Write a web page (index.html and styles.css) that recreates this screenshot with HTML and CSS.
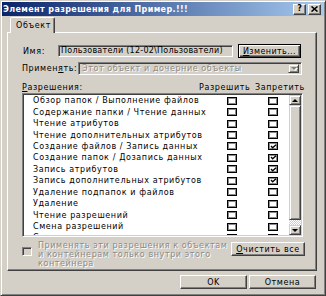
FILE: index.html
```html
<!DOCTYPE html>
<html lang="ru">
<head>
<meta charset="utf-8">
<title>Элемент разрешения</title>
<link rel="stylesheet" href="styles.css">
</head>
<body>
<div class="window">
  <div class="titlebar">
    <span class="title">Элемент разрешения для Пример.!!!</span>
    <div class="cbtns">
      <span class="cbtn">?</span>
      <span class="cbtn"><svg width="7" height="6" viewBox="0 0 7 6"><path d="M0.5 0.5 L6.5 5.5 M6.5 0.5 L0.5 5.5" stroke="#000" stroke-width="1.6" fill="none"/></svg></span>
    </div>
  </div>
  <div class="client">
    <div class="tabs"><div class="tab">Объект</div></div>
    <div class="panel">
      <div class="row-name">
        <span class="lbl-name">Имя:</span>
        <div class="field">Пользователи (12-02\Пользователи)</div>
        <div class="btn btn-change"><span><u>И</u>зменить...</span></div>
      </div>
      <div class="row-apply">
        <span class="lbl-apply">Примен<u>я</u>ть:</span>
        <div class="combo">
          <span class="combo-text">Этот объект и дочерние объекты</span>
          <span class="combo-arrow"><span class="tri-down dis"></span></span>
        </div>
      </div>
      <div class="list-head">
        <span class="lh-title"><u>Р</u>азрешения:</span>
        <span class="lh-col1">Разрешить</span>
        <span class="lh-col2">Запретить</span>
      </div>
      <div class="list">
        <div class="rows">
          <div class="perm"><span class="pname">Обзор папок / Выполнение файлов</span><span class="cb"></span><span class="cb cb2"></span></div>
          <div class="perm"><span class="pname">Содержание папки / Чтение данных</span><span class="cb"></span><span class="cb cb2"></span></div>
          <div class="perm"><span class="pname">Чтение атрибутов</span><span class="cb"></span><span class="cb cb2"></span></div>
          <div class="perm"><span class="pname">Чтение дополнительных атрибутов</span><span class="cb"></span><span class="cb cb2"></span></div>
          <div class="perm"><span class="pname">Создание файлов / Запись данных</span><span class="cb"></span><span class="cb cb2"><svg class="chk" viewBox="0 0 8 6"><path d="M1 2.5 L3 4.5 L7 0.8" stroke="#000" stroke-width="1.6" fill="none"/></svg></span></div>
          <div class="perm"><span class="pname">Создание папок / Дозапись данных</span><span class="cb"></span><span class="cb cb2"><svg class="chk" viewBox="0 0 8 6"><path d="M1 2.5 L3 4.5 L7 0.8" stroke="#000" stroke-width="1.6" fill="none"/></svg></span></div>
          <div class="perm"><span class="pname">Запись атрибутов</span><span class="cb"></span><span class="cb cb2"><svg class="chk" viewBox="0 0 8 6"><path d="M1 2.5 L3 4.5 L7 0.8" stroke="#000" stroke-width="1.6" fill="none"/></svg></span></div>
          <div class="perm"><span class="pname">Запись дополнительных атрибутов</span><span class="cb"></span><span class="cb cb2"><svg class="chk" viewBox="0 0 8 6"><path d="M1 2.5 L3 4.5 L7 0.8" stroke="#000" stroke-width="1.6" fill="none"/></svg></span></div>
          <div class="perm"><span class="pname">Удаление подпапок и файлов</span><span class="cb"></span><span class="cb cb2"></span></div>
          <div class="perm"><span class="pname">Удаление</span><span class="cb"></span><span class="cb cb2"></span></div>
          <div class="perm"><span class="pname">Чтение разрешений</span><span class="cb"></span><span class="cb cb2"></span></div>
          <div class="perm"><span class="pname">Смена разрешений</span><span class="cb"></span><span class="cb cb2"></span></div>
          <div class="perm"><span class="pname">Смена владельца</span><span class="cb"></span><span class="cb cb2"></span></div>
        </div>
        <div class="sb">
          <div class="sb-btn"><span class="tri-up"></span></div>
          <div class="sb-thumb"></div>
          <div class="sb-track"></div>
          <div class="sb-btn"><span class="tri-down"></span></div>
        </div>
      </div>
      <div class="bottom">
        <span class="cb-dis"></span>
        <div class="dis-text">Применять эти разрешения к объектам<br>и контейнерам только внутри этого<br>контейнера</div>
        <div class="btn btn-clear"><u>О</u>чистить все</div>
      </div>
    </div>
    <div class="footer">
      <div class="btn btn-foot">OK</div>
      <div class="btn btn-foot">Отмена</div>
    </div>
  </div>
</div>
</body>
</html>
```

FILE: styles.css
```css
* { box-sizing: border-box; }
html, body { margin: 0; padding: 0; }
body {
  width: 326px;
  height: 296px;
  overflow: hidden;
  background: #d4d0c8;
  font-family: "DejaVu Sans", sans-serif;
  font-size: 8px;
  letter-spacing: 0.6px;
  color: #000;
}
u { text-decoration: underline; text-underline-offset: 1px; }

.window {
  width: 326px;
  height: 296px;
  background: #d4d0c8;
  border: 1px solid;
  border-color: #d4d0c8 #404040 #404040 #d4d0c8;
  box-shadow: inset 1px 1px #fff, inset -1px -1px #808080;
  padding: 1px;
  display: flex;
  flex-direction: column;
}

.titlebar {
  flex: none;
  height: 14px;
  background: linear-gradient(90deg, #0a246a, #a6caf0);
  display: flex;
  align-items: center;
  padding: 0 3px 0 1px;
}
.title {
  flex: 1;
  color: #fff;
  font-weight: bold;
  font-size: 8px;
  letter-spacing: 0.4px;
  white-space: nowrap;
}
.cbtns { display: flex; gap: 2px; }
.cbtn {
  width: 13px;
  height: 11px;
  background: #d4d0c8;
  border: 1px solid;
  border-color: #fff #404040 #404040 #fff;
  box-shadow: inset -1px -1px #808080;
  display: flex;
  align-items: center;
  justify-content: center;
  font-weight: bold;
  font-size: 8px;
  letter-spacing: 0;
  line-height: 1;
}

.client {
  flex: 1;
  display: flex;
  flex-direction: column;
  padding: 1px 7px 0 5px;
}
.tabs { height: 15px; display: flex; padding-left: 3px; }
.tab {
  position: relative;
  z-index: 1;
  width: 45px;
  height: 16px;
  background: #d4d0c8;
  border: 1px solid;
  border-bottom: none;
  border-color: #fff #404040 transparent #fff;
  box-shadow: inset -1px 0 #808080;
  border-radius: 2px 2px 0 0;
  padding: 3px 0 0 5px;
  line-height: 9px;
}

.panel {
  height: 239px;
  border: 1px solid;
  border-color: #fff #404040 #404040 #fff;
  box-shadow: inset -1px -1px #808080;
  padding: 11px 13px 0 14px;
  display: flex;
  flex-direction: column;
}

.row-name { display: flex; align-items: center; height: 14px; }
.lbl-name { width: 36px; padding-left: 1px; }
.field {
  width: 175px;
  height: 12px;
  border: 1px solid;
  border-color: #808080 #fff #fff #808080;
  box-shadow: inset 1px 1px #404040, inset -1px -1px #d4d0c8;
  padding-left: 2px;
  line-height: 10px;
  letter-spacing: 0.25px;
  white-space: nowrap;
  overflow: hidden;
}
.btn {
  background: #d4d0c8;
  border: 1px solid;
  border-color: #fff #404040 #404040 #fff;
  box-shadow: inset -1px -1px #808080;
  height: 14px;
  display: flex;
  align-items: center;
  justify-content: center;
  white-space: nowrap;
}
.btn-change {
  width: 63px;
  margin-left: 5px;
  letter-spacing: 0.4px;
  border: 1px solid #000;
  box-shadow: inset 1px 1px #fff, inset -1px -1px #404040, inset -2px -2px #808080;
}

.row-apply { display: flex; align-items: center; height: 13px; margin-top: 4px; }
.lbl-apply { width: 56px; }
.combo {
  width: 224px;
  height: 13px;
  border: 1px solid;
  border-color: #808080 #fff #fff #808080;
  box-shadow: inset 1px 1px #404040, inset -1px -1px #d4d0c8;
  display: flex;
  align-items: center;
  padding: 0 2px 0 3px;
}
.combo-text, .dis-text {
  color: #8c8a86;
  text-shadow: 1px 1px #fff;
  white-space: nowrap;
}
.combo-arrow {
  margin-left: auto;
  width: 11px;
  height: 9px;
  background: #d4d0c8;
  border: 1px solid;
  border-color: #d4d0c8 #404040 #404040 #d4d0c8;
  box-shadow: inset 1px 1px #fff, inset -1px -1px #808080;
  display: flex;
  align-items: center;
  justify-content: center;
}
.tri-down, .tri-up {
  width: 0;
  height: 0;
  border-left: 3px solid transparent;
  border-right: 3px solid transparent;
}
.tri-down { border-top: 3px solid #000; }
.tri-up { border-bottom: 3px solid #000; }
.tri-down.dis { border-top-color: #808080; filter: drop-shadow(1px 1px 0 #fff); }

.list-head { display: flex; height: 10px; margin-top: 8px; line-height: 10px; }
.lh-title { flex: 1; }
.lh-col1 { width: 56px; }
.lh-col2 { width: 48px; }

.list {
  height: 144px;
  display: flex;
  background: #fff;
  border: 1px solid;
  border-color: #808080 #fff #fff #808080;
  box-shadow: inset 1px 1px #404040, inset -1px -1px #d4d0c8;
  padding: 1px;
}
.rows { flex: 1; overflow: hidden; background: #fff; }
.perm { height: 11.45px; display: flex; align-items: center; }
.pname { width: 203px; flex: none; padding-left: 9px; white-space: nowrap; }
.cb {
  flex: none;
  width: 10px;
  height: 8px;
  border: 1px solid #000;
  box-shadow: inset 0 0 0 1px #8a8a8a;
  background: #fff;
  display: flex;
  align-items: center;
  justify-content: center;
}
.cb2 { margin-left: 31px; }
.chk { width: 7px; height: 5px; }

.sb { width: 12px; display: flex; flex-direction: column; }
.sb-btn, .sb-thumb {
  background: #d4d0c8;
  border: 1px solid;
  border-color: #d4d0c8 #404040 #404040 #d4d0c8;
  box-shadow: inset 1px 1px #fff, inset -1px -1px #808080;
}
.sb-btn { height: 10px; flex: none; display: flex; align-items: center; justify-content: center; }
.sb-thumb { height: 115px; flex: none; }
.sb-track {
  flex: 1;
  background: repeating-conic-gradient(#fff 0 25%, #d4d0c8 0 50%) 0 0 / 2px 2px;
}

.bottom { display: flex; margin-top: 5px; height: 27px; }
.cb-dis {
  flex: none;
  width: 10px;
  height: 9px;
  margin-top: 5px;
  background: #d4d0c8;
  border: 1px solid;
  border-color: #808080 #fff #fff #808080;
  box-shadow: inset 1px 1px #404040, inset -1px -1px #d4d0c8;
}
.dis-text { margin-left: 6px; margin-top: -1px; line-height: 9px; }
.btn-clear { width: 74px; margin-left: auto; margin-right: -2px; }

.footer { display: flex; justify-content: flex-end; gap: 2px; margin-top: 4px; padding-right: 1px; }
.btn-foot { width: 67px; }
```
